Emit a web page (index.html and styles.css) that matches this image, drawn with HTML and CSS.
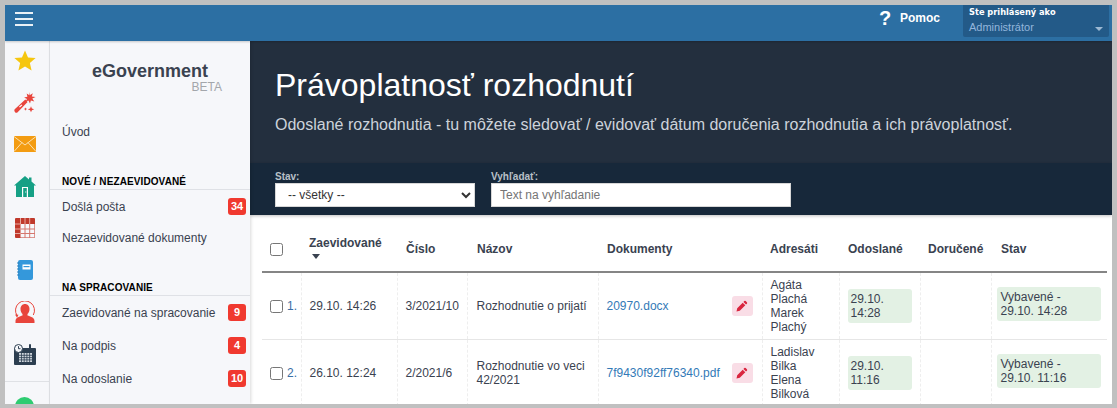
FILE: index.html
```html
<!DOCTYPE html>
<html lang="sk">
<head>
<meta charset="utf-8">
<title>Právoplatnosť rozhodnutí</title>
<link rel="stylesheet" href="styles.css">
</head>
<body>
<div class="frame">
  <header class="topbar">
    <button class="burger" aria-label="Menu"><span></span><span></span><span></span></button>
    <div class="top-right">
      <a class="help"><span class="help-q">?</span><span class="help-t">Pomoc</span></a>
      <div class="user">
        <div class="user-l">Ste prihlásený ako</div>
        <div class="user-n"><span>Administrátor</span><i class="caret"></i></div>
      </div>
    </div>
  </header>
  <div class="body">
    <nav class="rail">
      <div class="rail-icons">
        <div class="ri"><svg width="22" height="21" viewBox="0 0 24 22"><path fill="#f5c60f" d="M12 0l3.300 7.600 8.300.8-6.300 5.400 1.900 8.100L12 17.600 4.800 21.900l1.900-8.100L.4 8.400l8.300-.8z"/></svg></div>
        <div class="ri"><svg width="22" height="21" viewBox="0 0 22 21"><path fill="#e8453c" d="M.7 17.300l10.600-9.700 2.300 2.300-10 10.300c-.7.700-1.800.7-2.500 0s-1.100-2.200-.4-2.900z"/><path fill="#e8453c" d="M15 0l1 3 2.800-1.800-1 3.200 3.700.5-3.200 1.700 2 2.800-3.400-1-.9 3.100-1.600-2.900-2.900 1.200 1.500-2.900-2.900-1.500 3.300-.6-.7-3.400 2.700 1.800z"/><path fill="#e8453c" d="M17 14.300l.9 2.100 2.300.9-2.300.9-.9 2.100-.9-2.100-2.300-.9 2.300-.9zM11.500 15.500l.5 1.100 1.200.5-1.200.5-.5 1.100-.5-1.100-1.200-.5 1.200-.5z"/><path fill="#fff" d="M5 14.700l2.500-2.300.8.800-2.400 2.400z"/></svg></div>
        <div class="ri"><svg width="22" height="16" viewBox="0 0 22 16"><rect width="22" height="16" fill="#f39c12"/><path d="M0 .5l11 8.500L22 .5M0 15.500l8-9M22 15.500l-8-9" fill="none" stroke="#fbe0b0" stroke-width="1"/></svg></div>
        <div class="ri"><svg width="22" height="21" viewBox="0 0 22 21"><path fill="#16a085" d="M11 0l4 3.500V1.500h2.500v4L22 9.500h-2V21H2V9.500H0z"/><path fill="#fff" d="M8 11h6v10h-1.200v-9H9.200v9H8z"/><rect x="11.200" y="15.500" width="1" height="1" fill="#fff"/></svg></div>
        <div class="ri"><svg width="20" height="20" viewBox="0 0 20 20"><rect width="20" height="20" rx="1" fill="#c0392b"/><rect x="5.500" y="6" width="14" height="13.500" fill="#f7f8fb"/><path d="M10 6v14M14.700 6v14M5.500 11h14.500M5.500 15.500h14.500" stroke="#d5776e" stroke-width="1"/><path d="M5.500 0v6M10 0v6M14.700 0v6M0 6h5.500M0 11h5.500M0 15.500h5.500" stroke="#e9a89f" stroke-width="1"/></svg></div>
        <div class="ri"><svg width="16" height="20" viewBox="0 0 16 20"><rect x="1" width="15" height="20" rx="2" fill="#3498db"/><rect x="5.500" y="4.500" width="8" height="5" fill="#fff"/><rect x="6.500" y="6" width="6" height="1.200" fill="#3498db"/><path d="M0 3h2.500M0 6h2.500M0 9h2.500M0 12h2.500M0 15h2.500" stroke="#2a7fb8" stroke-width="1"/></svg></div>
        <div class="ri"><svg width="20" height="22" viewBox="0 0 20 22"><path fill="#e8453c" d="M10 3c2.800 0 4.500 2.200 4.500 5 0 2.500-1 4-2 5v1.500c2.500 1 7 1.700 7 5.500v2H.5v-2c0-3.800 4.500-4.500 7-5.500V13c-1-1-2-2.500-2-5 0-2.800 1.700-5 4.500-5z"/><path fill="none" stroke="#e8453c" stroke-width="1" d="M2 14.500A9.500 9.500 0 1 1 18.300 14"/><path fill="#e8453c" d="M0 13.500l3.500.3-1.500 3z"/></svg></div>
        <div class="ri"><svg width="22" height="21" viewBox="0 0 22 21"><path fill="#2c3e50" d="M1 4h20a1 1 0 0 1 1 1v15a1 1 0 0 1-1 1H1a1 1 0 0 1-1-1V5a1 1 0 0 1 1-1z"/><rect x="15" y="0" width="2" height="6" rx="1" fill="#2c3e50"/><path fill="#cfd6dc" d="M5 9h13v9H5z"/><path d="M7.500 9v9M10.200 9v9M12.900 9v9M15.600 9v9M5 11.300h13M5 13.600h13M5 15.900h13" stroke="#2c3e50" stroke-width=".8"/><circle cx="4.500" cy="4.500" r="4" fill="#f7f8fb" stroke="#2c3e50"/><path d="M4.500 2.200v2.500h2" fill="none" stroke="#2c3e50"/></svg></div>
      </div>
      <div class="rail-sep"></div>
      <div class="rail-dot"></div>
    </nav>
    <aside class="side">
      <div class="brand"><div class="brand-n">eGovernment</div><div class="brand-b">BETA</div></div>
      <a class="item first">Úvod</a>
      <div class="sec sec1">NOVÉ / NEZAEVIDOVANÉ</div>
      <a class="item b"><span>Došlá pošta</span><em class="badge">34</em></a>
      <a class="item n">Nezaevidované dokumenty</a>
      <div class="sec sec2">NA SPRACOVANIE</div>
      <a class="item b"><span>Zaevidované na spracovanie</span><em class="badge">9</em></a>
      <a class="item b"><span>Na podpis</span><em class="badge">4</em></a>
      <a class="item b"><span>Na odoslanie</span><em class="badge">10</em></a>
    </aside>
    <main class="main">
      <section class="hero">
        <h1>Právoplatnosť rozhodnutí</h1>
        <p>Odoslané rozhodnutia - tu môžete sledovať / evidovať dátum doručenia rozhodnutia a ich právoplatnosť.</p>
      </section>
      <section class="filters">
        <label class="f f-s"><span>Stav:</span><select><option>-- všetky --</option></select></label>
        <label class="f f-i"><span>Vyhľadať:</span><input type="text" placeholder="Text na vyhľadanie"></label>
      </section>
      <section class="content">
        <table>
          <colgroup><col class="c1"><col class="c2"><col class="c3"><col class="c4"><col class="c5"><col class="c6"><col class="c7"><col class="c8"><col class="c9"></colgroup>
          <thead>
            <tr>
              <th class="chk"><input type="checkbox"></th>
              <th class="sorted">Zaevidované<i class="sort"></i></th>
              <th>Číslo</th><th>Názov</th><th>Dokumenty</th><th>Adresáti</th><th>Odoslané</th><th>Doručené</th><th>Stav</th>
            </tr>
          </thead>
          <tbody>
            <tr>
              <td class="chk"><input type="checkbox"><span>1.</span></td>
              <td>29.10. 14:26</td><td>3/2021/10</td><td>Rozhodnutie o prijatí</td>
              <td><div class="doc"><a>20970.docx</a><button class="edit" aria-label="Upraviť"><svg width="12" height="12" viewBox="0 0 12 12"><path fill="#d9263f" d="M8.300 1.100a1 1 0 0 1 1.400 0l1.200 1.200a1 1 0 0 1 0 1.400l-.9.9-2.600-2.600zM6.700 2.700l2.600 2.600-5.500 5.500-3.300.7.700-3.300z"/></svg></button></div></td>
              <td>Agáta Plachá Marek Plachý</td>
              <td><div class="chip">29.10. 14:28</div></td><td></td>
              <td><div class="chip st">Vybavené -<br>29.10. 14:28</div></td>
            </tr>
            <tr>
              <td class="chk"><input type="checkbox"><span>2.</span></td>
              <td>26.10. 12:24</td><td>2/2021/6</td><td>Rozhodnutie vo veci 42/2021</td>
              <td><div class="doc"><a>7f9430f92ff76340.pdf</a><button class="edit" aria-label="Upraviť"><svg width="12" height="12" viewBox="0 0 12 12"><path fill="#d9263f" d="M8.300 1.100a1 1 0 0 1 1.400 0l1.200 1.200a1 1 0 0 1 0 1.400l-.9.9-2.600-2.600zM6.700 2.700l2.600 2.600-5.500 5.500-3.300.7.700-3.300z"/></svg></button></div></td>
              <td>Ladislav Bilka Elena Bilková</td>
              <td><div class="chip">29.10. 11:16</div></td><td></td>
              <td><div class="chip st">Vybavené -<br>29.10. 11:16</div></td>
            </tr>
          </tbody>
        </table>
      </section>
    </main>
  </div>
</div>
</body>
</html>
```

FILE: styles.css
```css
* { box-sizing: border-box; }
html, body { margin: 0; height: 100%; }
body {
  background: #c0c0c0;
  padding: 5px 5px 4px 5px;
  overflow: hidden;
  font-family: "Liberation Sans", Arial, sans-serif;
  font-size: 12px;
  color: #3a4250;
}
.frame { height: 399px; display: flex; flex-direction: column; overflow: hidden; background: #fff; }

.topbar {
  height: 36px; flex: none;
  background: #2c6fa3;
  display: flex; justify-content: space-between;
  box-shadow: 0 1px 2px rgba(0,0,0,.2);
  position: relative; z-index: 2;
}
.burger {
  width: 18px; height: 14px; margin: 7px 0 0 10px; padding: 0; border: 0; background: none;
  display: flex; flex-direction: column; justify-content: space-between;
}
.burger span { display: block; height: 2px; background: rgba(255,255,255,.9); }
.top-right { display: flex; padding-right: 3px; }
.help { display: flex; align-items: center; color: #fff; font-weight: bold; height: 26px; margin-right: 23px; }
.help-q { font-size: 20px; width: 12px; margin-right: 9px; text-align: center; }
.help-t { font-size: 12px; }
.user {
  width: 146px; height: 32px;
  background: #235a88; border-radius: 0 0 2px 2px;
  padding: 2px 6px 0 6px;
}
.user-l { font-family: "DejaVu Sans", sans-serif; font-weight: bold; font-size: 8.25px; color: #fff; line-height: 11px; height: 13px; }
.user-n { display: flex; justify-content: space-between; align-items: center; color: #93b6dc; font-size: 11px; line-height: 14px; }
.caret { width: 0; height: 0; border: 4px solid transparent; border-top: 4px solid #9db9d3; border-bottom: 0; margin: 3px 0 0; }

.body { flex: 1; display: flex; min-height: 0; }
.rail { width: 45px; flex: none; background: #f6f7fa; border-right: 1px solid #e2e4e8; display: flex; flex-direction: column; }
.rail-icons { margin: -2px 0 6px; }
.ri { height: 42px; display: flex; align-items: center; justify-content: center; padding-right: 4px; }
.rail-sep { height: 1px; background: #dfe1e5; flex: none; }
.rail-dot { width: 19px; height: 19px; border-radius: 50%; background: #2ecc71; margin: 15px 0 0 10px; flex: none; }

.side { width: 200px; flex: none; background: #f6f7fa; box-shadow: 1px 0 3px rgba(0,0,0,.15); position: relative; z-index: 1; }
.brand { width: 172px; text-align: center; padding-top: 21px; height: 78px; }
.brand-n { font-size: 18px; font-weight: bold; line-height: 19px; color: #3a4250; margin-left: 28px; }
.brand-b { font-size: 12px; line-height: 13px; color: #a3a6ab; text-align: right; }
.item { display: flex; align-items: center; justify-content: space-between; padding: 0 4px 0 12px; color: #3a4250; }
.first { height: 26px; }
.b { height: 33px; }
.n { height: 30px; }
.sec { font-size: 10px; letter-spacing: .1px; font-weight: bold; color: #000; padding-left: 12px; border-bottom: 1px solid #dfe1e6; line-height: 13px; padding-bottom: 1px; }
.sec1 { margin-top: 30px; }
.sec2 { margin-top: 28px; }
.badge { font-style: normal; font-weight: bold; font-size: 11px; color: #fff; background: #f0392f; border-radius: 3px; min-width: 18px; height: 17px; line-height: 17px; text-align: center; }

.main { flex: 1; min-width: 0; display: flex; flex-direction: column; }
.hero { height: 122px; flex: none; background: #232f3e; color: #fff; padding: 26px 0 0 25px; }
.hero h1 { margin: 0; font-size: 32px; font-weight: normal; line-height: 36px; }
.hero p { margin: 12px 0 0; font-size: 16px; line-height: 20px; color: #cdd3db; }
.filters { height: 52px; flex: none; background: #17283a; display: flex; padding: 7px 0 0 25px; box-shadow: 0 1px 3px rgba(0,0,0,.25); }
.f { display: flex; flex-direction: column; margin-right: 16px; }
.f span { font-size: 10px; font-weight: bold; line-height: 13px; color: #b9c0c8; }
.f select, .f input { height: 24px; border: 1px solid #d7d7d7; border-radius: 0; background: #fff; font: 12px "Liberation Sans", Arial, sans-serif; color: #333; margin: 0; }
.f-s select { width: 200px; padding-left: 8px; }
.f-i input { width: 300px; padding: 0 8px; }
.f-i input::placeholder { color: #757575; opacity: 1; }

.content { padding: 0 5px 0 12px; flex: 1; }
table { width: 845px; table-layout: fixed; border-collapse: collapse; color: #3a4250; }
.c1 { width: 39px; } .c2 { width: 96px; } .c3 { width: 70px; } .c4 { width: 131px; } .c5 { width: 164px; }
.c6 { width: 77px; } .c7 { width: 81px; } .c8 { width: 71px; } .c9 { width: 116px; }
thead tr { height: 57px; border-bottom: 2px solid #858585; }
th { text-align: left; font-size: 12px; font-weight: bold; padding: 12px 8px 0; vertical-align: middle; line-height: 14px; }
th.sorted { padding: 8px 8px 0 8px; }
.sort { display: block; width: 0; height: 0; border: 4px solid transparent; border-top: 5px solid #3a4250; border-bottom: 0; margin: 4px 0 0 3px; }
th.chk { padding-left: 8px; }
th:nth-child(3), th:nth-child(5), th:nth-child(7) { padding-left: 9px; }
th:nth-child(4), th:nth-child(9) { padding-left: 10px; }
tbody tr { height: 67px; border-bottom: 1px solid #e6e6e6; }
td { padding: 5px 8px; line-height: 14px; vertical-align: middle; border-left: 1px dashed #eee; }
td:nth-child(4) { padding-left: 9px; }
td.chk { border-left: 0; padding: 0 0 0 8px; color: #3a4250; white-space: nowrap; }
input[type=checkbox] { width: 13px; height: 13px; margin: 0; vertical-align: middle; }
.chk span { margin-left: 4px; color: #3a6ea5; vertical-align: middle; }
.doc { display: flex; justify-content: space-between; align-items: center; }
.doc a { color: #337ab7; }
.edit { width: 21px; height: 20px; padding: 0; border: 0; border-radius: 3px; background: #f9dde6; display: flex; align-items: center; justify-content: center; margin-right: 1px; }
.chip { background: #e3f1e4; border-radius: 3px; padding: 3px; line-height: 14px; }
.st { margin: 0 -2px 4px -3px; padding: 3px 4px; }
```
